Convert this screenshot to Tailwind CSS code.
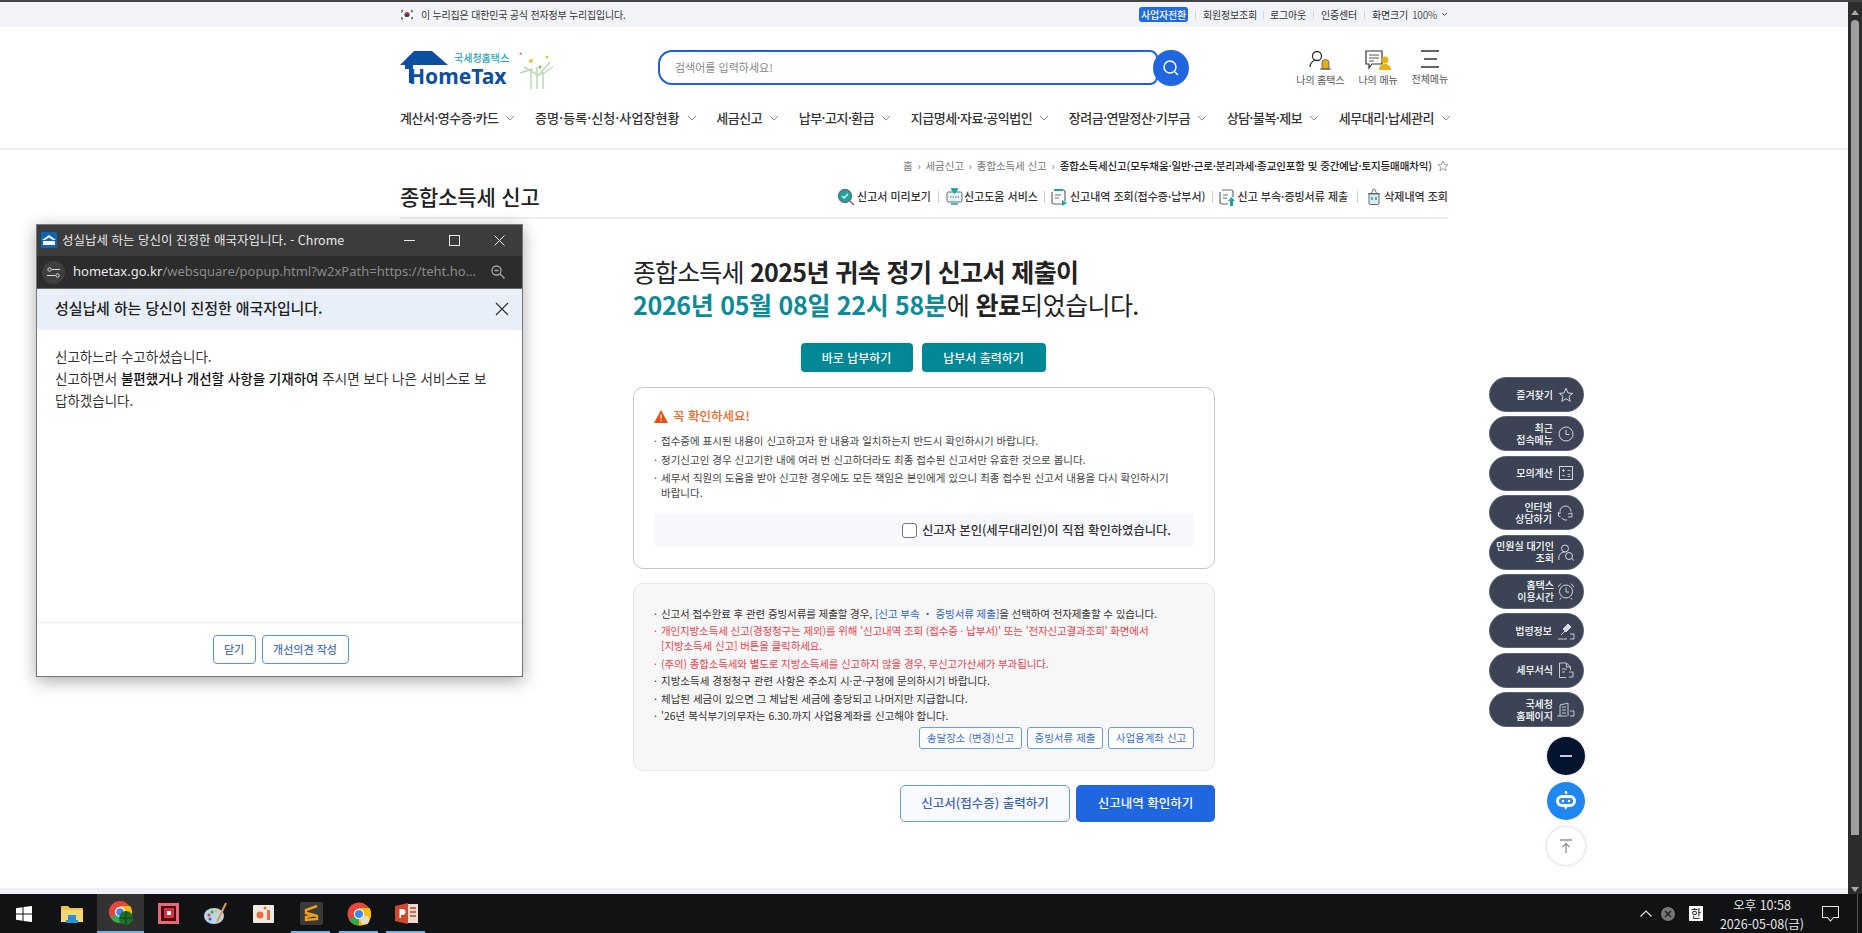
<!DOCTYPE html>
<html lang="ko">
<head>
  <meta charset="UTF-8">
  <title>종합소득세 신고 - 홈택스</title>
  <script src="https://cdn.jsdelivr.net/npm/@tailwindcss/browser@4"></script>
</head>
<body class="h-[933px] w-[1862px] overflow-hidden bg-white text-[#222] font-['Noto_Sans_CJK_KR','Noto_Sans',sans-serif]">
<div class="relative flex h-full flex-col">
  <div class="h-[2px] shrink-0 bg-[#444]"></div>
  <div class="flex min-h-0 flex-1">
    <!-- page -->
    <div class="flex min-w-0 flex-1 flex-col">
      <div class="relative min-h-0 flex-1 overflow-hidden">
        <!-- top strip -->
        <div class="h-[25px] bg-[#f1f3f8]">
          <div class="ml-[400px] flex h-full w-[1048px] items-center justify-between">
            <div class="flex items-center gap-[7px] text-[10px] tracking-[-0.2px] text-[#333]">
              <svg width="14" height="11" viewBox="0 0 14 11"><rect width="14" height="11" fill="#fff"/><circle cx="7" cy="5.500" r="2.600" fill="#cd2e3a"/><path d="M4.600 5.500a2.400 2.400 0 0 0 4.800 0z" fill="#0047a0"/><path d="M1 2l2-1M1 3.500l2-1.500M11 1l2 1M11 2l2 1.500M1 8l2 1.500M1 9.500l2 1M11 9.500l2-1.500M11 10l2-1" stroke="#222" stroke-width=".8"/></svg>
              <span>이 누리집은 대한민국 공식 전자정부 누리집입니다.</span>
            </div>
            <div class="flex items-center text-[10px] tracking-[-0.2px] text-[#333]">
              <span class="rounded-[3px] bg-[#1f6ae8] px-[2px] py-px font-medium leading-[13px] text-white">사업자전환</span>
              <span class="mx-[7px] h-[8px] w-px bg-[#d5d7dd]"></span>
              <span>회원정보조회</span>
              <span class="mx-[6px] h-[8px] w-px bg-[#d5d7dd]"></span>
              <span>로그아웃</span>
              <span class="mx-[7px] h-[8px] w-px bg-[#d5d7dd]"></span>
              <span>인증센터</span>
              <span class="mx-[7px] h-[8px] w-px bg-[#d5d7dd]"></span>
              <span>화면크기</span>
              <span class="ml-[4px] text-[#555]">100%</span>
              <svg class="ml-[4px]" width="7" height="5" viewBox="0 0 7 5"><path d="M1 1l2.500 2.500L6 1" fill="none" stroke="#555"/></svg>
            </div>
          </div>
        </div>

        <!-- logo, search, shortcuts -->
        <div class="ml-[400px] flex h-[65px] w-[1048px] items-start pt-[23px]">
          <div class="relative h-[40px] w-[258px]">
            <svg class="absolute left-0 top-[1px]" width="50" height="32" viewBox="0 0 50 32"><path d="M14 0h18l16 14H0z" fill="#0c4ea2"/><path d="M5 14h8v18H9V18H5z" fill="#0c4ea2"/></svg>
            <span class="absolute left-[54px] top-[2px] text-[10px] font-medium leading-[12px] text-[#19a8b8]">국세청홈택스</span>
            <span class="absolute left-[9px] top-[14px] font-['Noto_Sans','Noto_Sans_CJK_KR',sans-serif] text-[21px] font-bold leading-[24px] text-[#0c4ea2]">HomeTax</span>
            <svg class="absolute left-[116px] top-[2px]" width="40" height="38" viewBox="0 0 40 38"><g fill="none" stroke="#bcd9b2" stroke-width="1.500"><path d="M15 37V18M21 37V15M27 37V20M8 15l14 8M4 21l13-4M34 10L22 24M37 15l-12 8"/></g><circle cx="15" cy="9" r="2" fill="#e8c24a"/><circle cx="31" cy="5" r="1.500" fill="#e8c24a"/><path d="M3 2l3 1-1-3z" fill="#e86a4a"/><circle cx="24" cy="15" r="1.500" fill="#8cb85a"/></svg>
          </div>
          <div class="flex h-[35px] w-[531px] items-center">
            <div class="flex h-full flex-1 items-center rounded-l-[14px] rounded-r-[8px] border-[2px] border-[#1f5fd8] pl-[15px] text-[11px] text-[#888]">검색어를 입력하세요!</div>
            <div class="-ml-[5px] flex h-[36px] w-[36px] shrink-0 items-center justify-center rounded-full bg-[#1f66e0]">
              <svg width="18" height="18" viewBox="0 0 18 18" fill="none" stroke="#fff" stroke-width="1.500"><circle cx="8" cy="8" r="6"/><path d="M12.500 12.500L16 16"/></svg>
            </div>
          </div>
          <div class="ml-auto flex items-start gap-[14px] text-[10px] tracking-[-0.1px] text-[#555]">
            <div class="flex flex-col items-center">
              <svg width="24" height="21" viewBox="0 0 24 21" fill="none"><circle cx="9" cy="6" r="4.500" stroke="#333" stroke-width="1.300"/><path d="M2 17c0-4 3-6 5-7" stroke="#333" stroke-width="1.300"/><path d="M14 19v-6a3.500 3.500 0 0 1 7 0v6z" fill="#e8b010" stroke="#555" stroke-width=".8"/><path d="M12 19h11" stroke="#555"/></svg>
              <span class="mt-[2px] whitespace-nowrap leading-[14px]">나의 홈택스</span>
            </div>
            <div class="flex flex-col items-center">
              <svg width="28" height="21" viewBox="0 0 28 21" fill="none"><path d="M1 1h16v13h-10l-3 4v-4H1z" stroke="#333" stroke-width="1.200" transform="translate(1 0)"/><path d="M5 5h10M5 8h10M5 11h5" stroke="#555"/><circle cx="21" cy="10" r="3.500" fill="#e8b010"/><path d="M15 20c0-4 3-6 6-6s6 2 6 6z" fill="#e8b010"/></svg>
              <span class="mt-[2px] whitespace-nowrap leading-[14px]">나의 메뉴</span>
            </div>
            <div class="flex flex-col items-center">
              <svg width="20" height="18" viewBox="0 0 20 18" stroke="#333" stroke-width="1.300"><path d="M1 1h18M4 9h13M1 17h18"/></svg>
              <span class="mt-[4px] whitespace-nowrap leading-[14px]">전체메뉴</span>
            </div>
          </div>
        </div>

        <!-- main nav -->
        <nav class="ml-[400px] flex h-[56px] w-[1051px] items-center justify-between pb-[4px] text-[13px] font-medium tracking-[-0.5px] text-[#333]">
          <span class="flex items-center gap-[7px]">계산서·영수증·카드<svg width="10" height="6" viewBox="0 0 10 6"><path d="M1 1l4 4 4-4" fill="none" stroke="#888"/></svg></span>
          <span class="flex items-center gap-[7px] tracking-[0.1px]">증명·등록·신청·사업장현황<svg width="10" height="6" viewBox="0 0 10 6"><path d="M1 1l4 4 4-4" fill="none" stroke="#888"/></svg></span>
          <span class="flex items-center gap-[7px]">세금신고<svg width="10" height="6" viewBox="0 0 10 6"><path d="M1 1l4 4 4-4" fill="none" stroke="#888"/></svg></span>
          <span class="flex items-center gap-[7px]">납부·고지·환급<svg width="10" height="6" viewBox="0 0 10 6"><path d="M1 1l4 4 4-4" fill="none" stroke="#888"/></svg></span>
          <span class="flex items-center gap-[7px]">지급명세·자료·공익법인<svg width="10" height="6" viewBox="0 0 10 6"><path d="M1 1l4 4 4-4" fill="none" stroke="#888"/></svg></span>
          <span class="flex items-center gap-[7px]">장려금·연말정산·기부금<svg width="10" height="6" viewBox="0 0 10 6"><path d="M1 1l4 4 4-4" fill="none" stroke="#888"/></svg></span>
          <span class="flex items-center gap-[7px]">상담·불복·제보<svg width="10" height="6" viewBox="0 0 10 6"><path d="M1 1l4 4 4-4" fill="none" stroke="#888"/></svg></span>
          <span class="flex items-center gap-[7px]">세무대리·납세관리<svg width="10" height="6" viewBox="0 0 10 6"><path d="M1 1l4 4 4-4" fill="none" stroke="#888"/></svg></span>
        </nav>
        <div class="h-[2px] bg-[#eceef2]"></div>

        <!-- breadcrumb -->
        <div class="ml-[400px] flex h-[31px] w-[1049px] items-center justify-end gap-[5px] text-[10.500px] tracking-[-0.1px] text-[#777]">
          <span>홈</span><span>›</span><span>세금신고</span><span>›</span><span>종합소득세 신고</span><span>›</span>
          <span class="font-medium text-[#222]">종합소득세신고(모두채움·일반·근로·분리과세·종교인포함 및 중간예납·토지등매매차익)</span>
          <svg width="12" height="12" viewBox="0 0 24 24" fill="none" stroke="#999" stroke-width="1.800"><path d="M12 2l3 7 7 .6-5.500 4.600 1.800 7.300L12 17.500 5.700 21.500l1.800-7.300L2 9.600 9 9z"/></svg>
        </div>

        <!-- page title row -->
        <div class="ml-[400px] flex h-[38px] w-[1048px] items-center justify-between border-b-[2px] border-[#eceef0] pb-[5px]">
          <h1 class="text-[21px] font-medium tracking-[-0.2px] text-[#222]">종합소득세 신고</h1>
          <div class="flex items-center text-[11px] font-medium text-[#333]">
            <svg class="mr-[2px]" width="18" height="18" viewBox="0 0 18 18"><circle cx="8" cy="8" r="6.500" fill="#17a7a0" stroke="#667" stroke-width="1.300"/><path d="M5 8l2 2 4-4" fill="none" stroke="#fff" stroke-width="1.300"/><path d="M13 13l4 4" stroke="#667" stroke-width="1.500"/></svg>
            <span>신고서 미리보기</span>
            <span class="mx-[7px] h-[12px] w-px bg-[#ccc]"></span>
            <svg class="mr-[1px]" width="17" height="17" viewBox="0 0 17 17"><rect x="1" y="4" width="15" height="10" rx="1.500" fill="#e4f4f4" stroke="#667"/><path d="M5 1.500a1.500 1.500 0 0 1 3.500 0 1.500 1.500 0 0 1 3.500 0L8.500 6z" fill="#17a7a0"/><path d="M4 9h9" stroke="#667" stroke-dasharray="1.500 1"/><path d="M5 16h7" stroke="#17a7a0" stroke-width="1.500"/></svg>
            <span>신고도움 서비스</span>
            <span class="mx-[6px] h-[12px] w-px bg-[#ccc]"></span>
            <svg class="mr-[3px]" width="16" height="18" viewBox="0 0 16 18"><path d="M3 2h9a2 2 0 0 1 2 2v9M11 16H3a2 2 0 0 1-2-2V4" fill="none" stroke="#667" stroke-width="1.200"/><path d="M4 7h6M4 10h4" stroke="#667"/><path d="M3 1h9v2H3z" fill="#17a7a0"/><path d="M11 12l5 3-5 3z" fill="#17a7a0"/></svg>
            <span>신고내역 조회(접수증·납부서)</span>
            <span class="mx-[6px] h-[12px] w-px bg-[#ccc]"></span>
            <svg class="mr-[3px]" width="16" height="18" viewBox="0 0 16 18"><path d="M3 2h9a2 2 0 0 1 2 2v5M9 16H3a2 2 0 0 1-2-2V4" fill="none" stroke="#667" stroke-width="1.200"/><path d="M4 7h5M4 10h4" stroke="#667"/><path d="M12.500 9l3.500 4h-2v5h-3v-5H9z" fill="#17a7a0"/></svg>
            <span>신고 부속·증빙서류 제출</span>
            <span class="mx-[9px] h-[12px] w-px bg-[#ccc]"></span>
            <svg class="mr-[3px]" width="14" height="17" viewBox="0 0 14 17"><path d="M2 6h10v9a1.500 1.500 0 0 1-1.500 1.500h-7A1.500 1.500 0 0 1 2 15z" fill="#dcecec" stroke="#667"/><path d="M1 5.500h12M4.500 5l2-4h1l2 4" fill="none" stroke="#667"/><path d="M5 9v3M9 9v3" stroke="#17a7a0" stroke-width="1.500"/></svg>
            <span>삭제내역 조회</span>
          </div>
        </div>

        <!-- result column -->
        <main class="ml-[633px] w-[582px] pt-[36px]">
          <h2 class="text-[25px] leading-[33px] tracking-[-0.6px] text-[#222]">
            <span class="tracking-[-0.9px]">종합소득세</span> <span class="font-bold">2025년 귀속 정기 신고서 제출이</span><br>
            <span class="font-bold tracking-[-0.3px] text-[#0b8a98]">2026년 05월 08일 22시 58분</span><span>에</span> <span class="font-bold">완료</span><span>되었습니다.</span>
          </h2>
          <div class="mt-[22px] flex justify-center gap-[9px] pr-[2px]">
            <span class="flex h-[29px] w-[112px] items-center justify-center rounded-[4px] bg-[#008896] text-[12px] font-medium text-white">바로 납부하기</span>
            <span class="flex h-[29px] w-[124px] items-center justify-center rounded-[4px] bg-[#008896] text-[12px] font-medium text-white">납부서 출력하기</span>
          </div>

          <section class="mt-[15px] h-[182px] rounded-[10px] border border-[#c9c9c9] px-[20px] pt-[19px]">
            <div class="flex items-center gap-[5px] text-[12.500px] font-medium leading-[18px] text-[#f26522]">
              <svg width="14" height="13" viewBox="0 0 14 13"><path d="M7 0l7 13H0z" fill="#f2490f"/><path d="M7 4.500v4M7 9.800v1.400" stroke="#fff" stroke-width="1.300"/></svg>
              <span>꼭 확인하세요!</span>
            </div>
            <ul class="mt-[8px] text-[10.500px] leading-[15px] text-[#444]">
              <li class="mb-[3.500px] flex"><span class="w-[7px] shrink-0">·</span><span>접수증에 표시된 내용이 신고하고자 한 내용과 일치하는지 반드시 확인하시기 바랍니다.</span></li>
              <li class="mb-[3.500px] flex"><span class="w-[7px] shrink-0">·</span><span>정기신고인 경우 신고기한 내에 여러 번 신고하더라도 최종 접수된 신고서만 유효한 것으로 봅니다.</span></li>
              <li class="flex w-[515px]"><span class="w-[7px] shrink-0">·</span><span>세무서 직원의 도움을 받아 신고한 경우에도 모든 책임은 본인에게 있으니 최종 접수된 신고서 내용을 다시 확인하시기<br>바랍니다.</span></li>
            </ul>
            <div class="mt-[13px] flex h-[34px] items-center justify-end rounded-[4px] bg-[#f7f8fb] pr-[23px] text-[12.300px] font-medium text-[#333]">
              <span class="mr-[5px] h-[15px] w-[15px] rounded-[3px] border border-[#777] bg-white"></span>
              <span>신고자 본인(세무대리인)이 직접 확인하였습니다.</span>
            </div>
          </section>

          <section class="mt-[14px] h-[188px] rounded-[10px] border border-[#e6e6e6] bg-[#f7f7f7] px-[20px] pt-[22px] text-[10.500px] leading-[15px] text-[#333]">
            <ul>
              <li class="mb-[2.400px] flex tracking-[-0.1px]"><span class="w-[7px] shrink-0">·</span><span>신고서 접수완료 후 관련 증빙서류를 제출할 경우, <span class="text-[#2c63d6]">[신고 부속 ・ 증빙서류 제출]</span>을 선택하여 전자제출할 수 있습니다.</span></li>
              <li class="mb-[2.400px] flex tracking-[-0.13px] text-[#f0414c]"><span class="w-[7px] shrink-0">·</span><span>개인지방소득세 신고(경정청구는 제외)를 위해 '신고내역 조회 (접수증 · 납부서)' 또는 '전자신고결과조회' 화면에서<br>[지방소득세 신고] 버튼을 클릭하세요.</span></li>
              <li class="mb-[2.400px] flex tracking-[-0.13px] text-[#f0414c]"><span class="w-[7px] shrink-0">·</span><span>(주의) 종합소득세와 별도로 지방소득세를 신고하지 않을 경우, 무신고가산세가 부과됩니다.</span></li>
              <li class="mb-[2.400px] flex"><span class="w-[7px] shrink-0">·</span><span>지방소득세 경정청구 관련 사항은 주소지 시·군·구청에 문의하시기 바랍니다.</span></li>
              <li class="mb-[2.400px] flex"><span class="w-[7px] shrink-0">·</span><span>체납된 세금이 있으면 그 체납된 세금에 충당되고 나머지만 지급합니다.</span></li>
              <li class="flex"><span class="w-[7px] shrink-0">·</span><span>'26년 복식부기의무자는 6.30.까지 사업용계좌를 신고해야 합니다.</span></li>
            </ul>
            <div class="mt-[4px] flex justify-end gap-[5px] text-[#3a6fd8]">
              <span class="flex h-[22px] w-[103px] items-center justify-center rounded-[3px] border border-[#6a9bea] bg-white">송달장소 (변경)신고</span>
              <span class="flex h-[22px] w-[76px] items-center justify-center rounded-[3px] border border-[#6a9bea] bg-white">증빙서류 제출</span>
              <span class="flex h-[22px] w-[86px] items-center justify-center rounded-[3px] border border-[#6a9bea] bg-white">사업용계좌 신고</span>
            </div>
          </section>

          <div class="mt-[14px] flex justify-end gap-[6px] text-[12.500px] font-medium">
            <span class="flex h-[37px] w-[170px] items-center justify-center rounded-[5px] border border-[#6a9bea] bg-[#f8faff] text-[#3a64c0]">신고서(접수증) 출력하기</span>
            <span class="flex h-[37px] w-[139px] items-center justify-center rounded-[5px] bg-[#1f66e0] text-white">신고내역 확인하기</span>
          </div>
        </main>

        <!-- floating quick menu -->
        <div class="absolute left-[1488px] top-[375px] flex w-[96px] flex-col items-end gap-[4.400px]">
          <div class="flex h-[35px] w-[95px] items-center justify-end gap-[5px] rounded-full border border-[#8a8f9a]/40 bg-[#3b4354] pr-[9px] text-right text-[10px] font-medium leading-[12px] text-white">
            <span>즐겨찾기</span>
            <svg width="16" height="16" viewBox="0 0 24 24" fill="none" stroke="#d5d8de" stroke-width="1.500"><path d="M12 2l3 7 7 .6-5.500 4.600 1.800 7.300L12 17.500 5.700 21.500l1.800-7.300L2 9.600 9 9z"/></svg>
          </div>
          <div class="flex h-[35px] w-[95px] items-center justify-end gap-[5px] rounded-full border border-[#8a8f9a]/40 bg-[#3b4354] pr-[9px] text-right text-[10px] font-medium leading-[12px] text-white">
            <span>최근<br>접속메뉴</span>
            <svg width="16" height="16" viewBox="0 0 16 16" fill="none" stroke="#d5d8de"><circle cx="8" cy="8" r="7"/><path d="M8 4v4.500h3.500"/></svg>
          </div>
          <div class="flex h-[35px] w-[95px] items-center justify-end gap-[5px] rounded-full border border-[#8a8f9a]/40 bg-[#3b4354] pr-[9px] text-right text-[10px] font-medium leading-[12px] text-white">
            <span>모의계산</span>
            <svg width="16" height="16" viewBox="0 0 16 16" fill="none" stroke="#d5d8de"><rect x="1.500" y="1.500" width="13" height="13"/><path d="M4 5.500h3M5.500 4v3M9.500 5.500h3M4 10.500h3M9.500 9.500h3M9.500 11.500h3" stroke-width=".8"/></svg>
          </div>
          <div class="flex h-[35px] w-[95px] items-center justify-end gap-[5px] rounded-full border border-[#8a8f9a]/40 bg-[#3b4354] pr-[9px] text-right text-[10px] font-medium leading-[12px] text-white">
            <span>인터넷<br>상담하기</span>
            <svg width="17" height="16" viewBox="0 0 17 16" fill="none" stroke="#d5d8de"><path d="M3 9V6.500a5.500 5.500 0 0 1 11 0"/><path d="M1.500 7v4l2 1M5 13c1 2 3 2 5 2"/><path d="M11 9l4-1v4h-4" stroke-width=".9"/></svg>
          </div>
          <div class="flex h-[35px] w-[95px] items-center justify-end gap-[4px] rounded-full border border-[#8a8f9a]/40 bg-[#3b4354] pr-[8px] text-right text-[10px] font-medium leading-[12px] text-white">
            <span class="whitespace-nowrap">민원실 대기인<br>조회</span>
            <svg width="17" height="17" viewBox="0 0 17 17" fill="none" stroke="#d5d8de"><circle cx="7" cy="4.500" r="3.500"/><path d="M1 16c-1-5 2-8 6-8"/><circle cx="11" cy="12" r="3.500"/><path d="M13.500 14.500L16 16.500"/></svg>
          </div>
          <div class="flex h-[35px] w-[95px] items-center justify-end gap-[3px] rounded-full border border-[#8a8f9a]/40 bg-[#3b4354] pr-[8px] text-right text-[10px] font-medium leading-[12px] text-white">
            <span>홈택스<br>이용시간</span>
            <svg width="18" height="18" viewBox="0 0 18 18" fill="none" stroke="#d5d8de"><circle cx="9" cy="9.500" r="6.500"/><path d="M9 5.500v4.500h3M1 5l3-3.500M17 5l-3-3.500M4 16l-1 1.500M14 16l1 1.500"/></svg>
          </div>
          <div class="flex h-[35px] w-[95px] items-center justify-end gap-[5px] rounded-full border border-[#8a8f9a]/40 bg-[#3b4354] pr-[8px] text-right text-[10px] font-medium leading-[12px] text-white">
            <span>법령정보</span>
            <svg width="18" height="18" viewBox="0 0 18 18" fill="none" stroke="#d5d8de"><path d="M6 7l5-5 3 3-5 5z" fill="#d5d8de"/><path d="M8 9l-4 4M1 17h9M13 12h4v5h-4" stroke-width=".9"/></svg>
          </div>
          <div class="flex h-[35px] w-[95px] items-center justify-end gap-[5px] rounded-full border border-[#8a8f9a]/40 bg-[#3b4354] pr-[9px] text-right text-[10px] font-medium leading-[12px] text-white">
            <span>세무서식</span>
            <svg width="16" height="17" viewBox="0 0 16 17" fill="none" stroke="#d5d8de"><path d="M1.500 1h7l4 4v3M8 15.500H1.500V1M8.500 1v4h4M4 7h5M4 10h3M11 10h4v5h-4" stroke-width=".9"/></svg>
          </div>
          <div class="flex h-[35px] w-[95px] items-center justify-end gap-[4px] rounded-full border border-[#8a8f9a]/40 bg-[#3b4354] pr-[8px] text-right text-[10px] font-medium leading-[12px] text-white">
            <span>국세청<br>홈페이지</span>
            <svg width="18" height="16" viewBox="0 0 18 16" fill="none" stroke="#d5d8de"><path d="M3 14V3l8-2v13M0 14h10M5 5h4M5 8h4M5 11h4M13 9h4v5h-4" stroke-width=".9"/></svg>
          </div>
          <div class="mr-[-1px] mt-[5px] flex h-[38px] w-[38px] items-center justify-center rounded-full bg-[#05142e] shadow-[0_0_3px_#0003]">
            <span class="h-[2px] w-[12px] bg-[#c8ccd4]"></span>
          </div>
          <div class="mr-[-1px] mt-[3px] flex h-[38px] w-[38px] items-center justify-center rounded-full bg-[#1e88f0]">
            <svg width="22" height="20" viewBox="0 0 22 20"><path d="M11 0v3" stroke="#fff" stroke-width="1.500"/><circle cx="11" cy="1.500" r="1.300" fill="#fff"/><rect x="1" y="4" width="20" height="12" rx="6" fill="#fff"/><path d="M9 15h4l-2.500 4z" fill="#fff"/><rect x="4" y="7" width="14" height="6" rx="3" fill="#1e88f0"/><circle cx="8" cy="10" r="1.300" fill="#fff"/><circle cx="14" cy="10" r="1.300" fill="#fff"/></svg>
          </div>
          <div class="mr-[-1px] mt-[3px] flex h-[38px] w-[38px] items-center justify-center rounded-full bg-white shadow-[0_0_4px_#0003]">
            <svg width="12" height="14" viewBox="0 0 12 14" fill="none" stroke="#8f93a3" stroke-width="1.300"><path d="M0 1h12M6 14V5M2.500 8L6 4.500 9.500 8"/></svg>
          </div>
        </div>
      </div>
      <div class="h-[6px] shrink-0 bg-[#f0f0f6]"></div>
    </div>

    <!-- vertical scrollbar -->
    <div class="relative w-[14px] shrink-0 bg-[#2c2c2c]">
      <span class="absolute left-[3px] top-[8px] h-0 w-0 border-x-[4px] border-b-[5px] border-x-transparent border-b-[#aaa]"></span>
      <span class="absolute left-[3px] top-[18px] h-[815px] w-[8px] rounded-t-[4px] bg-[#9f9f9f]"></span>
      <span class="absolute bottom-[2px] left-[3px] h-0 w-0 border-x-[4px] border-t-[5px] border-x-transparent border-t-[#aaa]"></span>
    </div>
  </div>

  <!-- chrome popup window -->
  <div class="absolute left-[36px] top-[224px] flex h-[453px] w-[487px] flex-col border border-[#777] bg-white shadow-[0_4px_16px_#0005]">
    <div class="flex h-[31px] shrink-0 items-center bg-[#3c3c3c] pb-[1px] pl-[4px] text-[12.500px] text-[#e8e8e8]">
      <svg width="16" height="16" viewBox="0 0 16 16"><rect width="16" height="16" fill="#0a66b8"/><path d="M1 8l7-5 7 5h-3L8 5.500 4 8z" fill="#fff"/><rect x="2" y="9" width="12" height="4" fill="#fff"/></svg>
      <span class="ml-[5px]">성실납세 하는 당신이 진정한 애국자입니다. - Chrome</span>
      <div class="ml-auto flex items-center">
        <svg class="mr-[34px]" width="11" height="11" viewBox="0 0 11 11" stroke="#e8e8e8"><path d="M0 5.500h11"/></svg>
        <svg class="mr-[34px]" width="11" height="11" viewBox="0 0 11 11" fill="none" stroke="#e8e8e8"><rect x=".5" y=".5" width="10" height="10"/></svg>
        <svg class="mr-[17px]" width="11" height="11" viewBox="0 0 11 11" stroke="#e8e8e8"><path d="M.5.500l10 10M10.500.500l-10 10"/></svg>
      </div>
    </div>
    <div class="flex h-[33px] shrink-0 items-center border-b border-[#666] bg-[#2c2c2c] pl-[5px] pr-[17px] font-['Noto_Sans',sans-serif] text-[13px]">
      <span class="flex h-[23px] w-[23px] items-center justify-center rounded-full bg-[#3f3f3f]">
        <svg width="13" height="11" viewBox="0 0 13 11" fill="none" stroke="#ddd"><path d="M5 2.500h8M0 8.500h8"/><circle cx="2.500" cy="2.500" r="1.700"/><circle cx="10.500" cy="8.500" r="1.700"/></svg>
      </span>
      <span class="ml-[8px] text-[#e8e8e8]">hometax.go.kr</span><span class="text-[#8b8b8b]">/websquare/popup.html?w2xPath=https://teht.ho...</span>
      <svg class="ml-auto" width="14" height="14" viewBox="0 0 14 14" fill="none" stroke="#aaa" stroke-width="1.300"><circle cx="5.500" cy="5.500" r="4.500"/><path d="M9 9l4.500 4.500M3.500 5.500h4"/></svg>
    </div>
    <div class="flex h-[41px] shrink-0 items-center justify-between bg-[#e8eff9] pb-[2px] pl-[18px] pr-[13px] text-[15px] font-medium tracking-[-0.1px] text-[#222]">
      <span>성실납세 하는 당신이 진정한 애국자입니다.</span>
      <svg width="14" height="14" viewBox="0 0 14 14" stroke="#333" stroke-width="1.200"><path d="M1 1l12 12M13 1L1 13"/></svg>
    </div>
    <div class="min-h-0 flex-1 px-[18px] pt-[15px] text-[13.500px] leading-[22px] text-[#333]">
      <p>신고하느라 수고하셨습니다.</p>
      <p>신고하면서 <span class="font-medium text-[#111]">불편했거나 개선할 사항을 기재하여</span> 주시면 보다 나은 서비스로 보<br>답하겠습니다.</p>
    </div>
    <div class="flex h-[54px] shrink-0 items-center justify-center gap-[6px] border-t border-[#e9eff8] pb-[1px] pl-[2px] text-[11px] font-medium text-[#4a6fc0]">
      <span class="flex h-[29px] w-[43px] items-center justify-center rounded-[4px] border border-[#5c8fe8]">닫기</span>
      <span class="flex h-[29px] w-[87px] items-center justify-center rounded-[4px] border border-[#5c8fe8]">개선의견 작성</span>
    </div>
  </div>

  <!-- windows taskbar -->
  <div class="flex h-[39px] shrink-0 items-center bg-[#111214]">
    <div class="flex w-[47px] justify-center"><svg width="16" height="16" viewBox="0 0 16 16" fill="#fff"><path d="M0 2.300l6.500-1v6.200H0zM7.500 1.100L16 0v7.500H7.500zM0 8.500h6.500v6.200l-6.500-1zM7.500 8.500H16V16l-8.500-1.100z"/></svg></div>
    <div class="flex w-[50px] justify-center"><svg width="22" height="18" viewBox="0 0 22 18"><path d="M0 2a1 1 0 0 1 1-1h6l2 2h12a1 1 0 0 1 1 1v13H0z" fill="#f0c24a"/><path d="M0 5h22v12H0z" fill="#f7d774"/><rect x="7" y="10" width="8" height="5" fill="#2a8fd8"/><path d="M5 15h12v3H5z" fill="#2a8fd8"/></svg></div>
    <div class="relative flex h-full w-[47px] items-center justify-center border-b-[2px] border-[#6fb4e8] bg-[#333]">
      <svg width="26" height="26" viewBox="0 0 26 26"><circle cx="12" cy="12" r="11" fill="#e8453c"/><path d="M12 12L2.500 17.500A11 11 0 0 0 12 23h1z" fill="#34a853"/><path d="M12 6h10.200A11 11 0 0 1 13 23z" fill="#fbbc05"/><circle cx="12" cy="12" r="5" fill="#fff"/><circle cx="12" cy="12" r="3.800" fill="#4285f4"/><circle cx="18" cy="18" r="7" fill="#1f6e2a"/><path d="M18 11v14M12 18h12" stroke="#0f4018"/></svg>
    </div>
    <div class="ml-px flex w-[47px] justify-center"><svg width="21" height="21" viewBox="0 0 21 21"><rect width="21" height="21" fill="#e46a78"/><rect x="3" y="3" width="15" height="15" fill="#4a0a10"/><rect x="6" y="5" width="10" height="10" fill="#d8303c"/><rect x="9" y="8" width="4" height="4" fill="#fff"/></svg></div>
    <div class="flex w-[48px] justify-center"><svg width="24" height="24" viewBox="0 0 24 24"><ellipse cx="10" cy="14" rx="10" ry="8" fill="#bcd4e8"/><circle cx="5" cy="13" r="1.500" fill="#e04040"/><circle cx="8" cy="10" r="1.500" fill="#40a040"/><circle cx="12" cy="9" r="1.500" fill="#e8c040"/><circle cx="6" cy="17" r="1.500" fill="#3060d0"/><path d="M22 1l-9 19" stroke="#d8a050" stroke-width="2"/></svg></div>
    <div class="flex w-[47px] justify-center"><svg width="21" height="18" viewBox="0 0 21 18"><rect width="21" height="18" rx="1" fill="#efe9e4"/><circle cx="7" cy="10" r="3.500" fill="#e8703a"/><rect x="14" y="5" width="3" height="10" fill="#e8703a"/><circle cx="12" cy="3" r="1.500" fill="#e8703a"/></svg></div>
    <div class="relative flex h-full w-[48px] items-center justify-center">
      <svg width="23" height="23" viewBox="0 0 23 23"><rect width="23" height="23" rx="2" fill="#3a3a3a"/><path d="M17 5L6 9v3l11 3v3L6 19v-3l8-2-8-2" fill="none" stroke="#f59e1b" stroke-width="2.400" transform="translate(0 -1)"/></svg>
      <span class="absolute bottom-0 left-[4px] h-[2px] w-[39px] bg-[#6fb4e8]"></span>
    </div>
    <div class="relative flex h-full w-[48px] items-center justify-center">
      <svg width="24" height="24" viewBox="0 0 24 24"><circle cx="12" cy="12" r="11.500" fill="#e8453c"/><path d="M12 12L2 17.500A11.500 11.500 0 0 0 12 23.500z" fill="#34a853"/><path d="M12 6h10.500A11.500 11.500 0 0 1 12 23.500z" fill="#fbbc05"/><circle cx="12" cy="12" r="5.200" fill="#fff"/><circle cx="12" cy="12" r="4" fill="#4285f4"/><circle cx="18" cy="18" r="4.500" fill="#e8dcc0"/></svg>
      <span class="absolute bottom-0 left-[4px] h-[2px] w-[39px] bg-[#6fb4e8]"></span>
    </div>
    <div class="relative flex h-full w-[47px] items-center justify-center">
      <svg width="23" height="21" viewBox="0 0 23 21"><rect x="9" y="1" width="14" height="19" fill="#f3d8cf"/><path d="M15 5h6M15 9h6M15 13h6" stroke="#c8452a" stroke-width="1.500"/><path d="M0 3l13-3v21L0 18z" fill="#cf4a2a"/><path d="M4.500 6h3a2.500 2.500 0 0 1 0 6h-1.500v3h-1.500z" fill="#fff"/></svg>
      <span class="absolute bottom-0 left-[3px] h-[2px] w-[39px] bg-[#6fb4e8]"></span>
    </div>
    <div class="ml-auto flex h-full items-center text-[#e6e6e6]">
      <svg width="12" height="7" viewBox="0 0 12 7" fill="none" stroke="#e6e6e6" stroke-width="1.200"><path d="M.5 6.500L6 1l5.500 5.500"/></svg>
      <svg class="ml-[9px]" width="14" height="14" viewBox="0 0 14 14"><circle cx="7" cy="7" r="7" fill="#777"/><path d="M4 4l6 6M10 4l-6 6" stroke="#222" stroke-width="1.500"/></svg>
      <span class="ml-[14px] flex h-[15px] w-[14px] items-center justify-center bg-white text-[11px] leading-none text-black">한</span>
      <div class="ml-[17px] flex w-[84px] flex-col items-center text-[12.500px] leading-[19px]">
        <span>오후 10:58</span>
        <span class="whitespace-nowrap">2026-05-08(금)</span>
      </div>
      <svg class="ml-[18px]" width="17" height="16" viewBox="0 0 17 16" fill="none" stroke="#e6e6e6" stroke-width="1.100"><path d="M.5.500h16v11h-5l-3 3.500-3-3.500h-5z"/></svg>
      <span class="ml-[18px] h-full w-px bg-[#555]"></span>
      <span class="w-[4px]"></span>
    </div>
  </div>
</div>
</body>
</html>
